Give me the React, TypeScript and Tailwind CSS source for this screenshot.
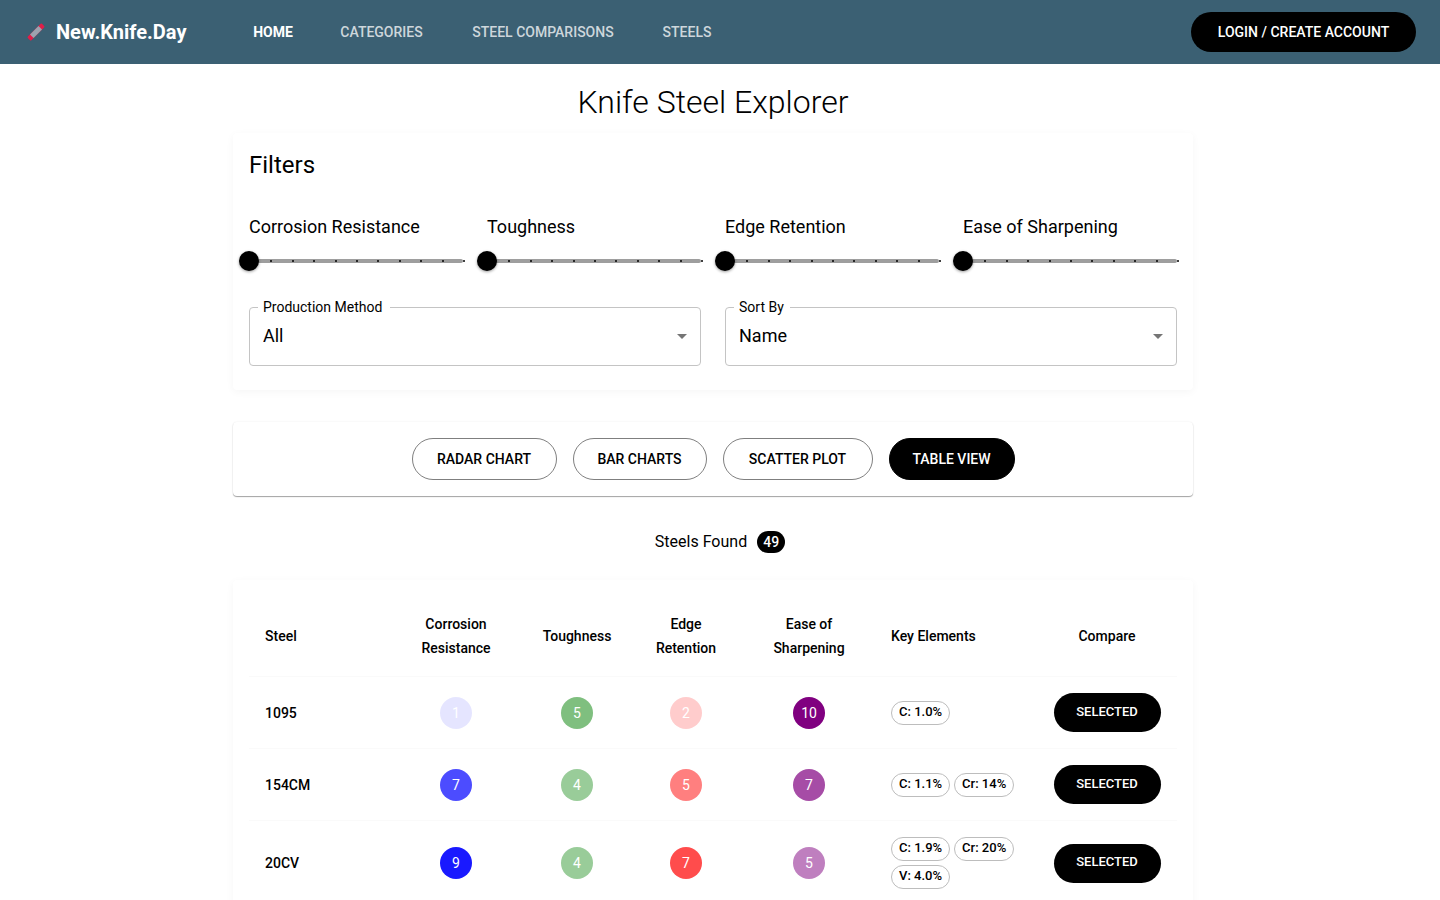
const navLinks = [
  { label: "HOME", width: "min-w-[86px]", active: true },
  { label: "CATEGORIES", width: "min-w-[131px]", active: false },
  { label: "STEEL COMPARISONS", width: "min-w-[192px]", active: false },
  { label: "STEELS", width: "min-w-[96px]", active: false },
];

const sliders = [
  { id: "corrosion", label: "Corrosion Resistance" },
  { id: "toughness", label: "Toughness" },
  { id: "edge", label: "Edge Retention" },
  { id: "ease", label: "Ease of Sharpening" },
];

const views = [
  { label: "RADAR CHART", width: "w-[145px]" },
  { label: "BAR CHARTS", width: "w-[134px]" },
  { label: "SCATTER PLOT", width: "w-[150px]" },
  { label: "TABLE VIEW", width: "w-[126px]" },
];

const steels = [
  { name: "1095", corrosion: 1, toughness: 5, edge: 2, ease: 10, elements: ["C: 1.0%"] },
  { name: "154CM", corrosion: 7, toughness: 4, edge: 5, ease: 7, elements: ["C: 1.1%", "Cr: 14%"] },
  { name: "20CV", corrosion: 9, toughness: 4, edge: 7, ease: 5, elements: ["C: 1.9%", "Cr: 20%", "V: 4.0%"] },
];

function KnifeLogo() {
  return (
    <svg width="24" height="24" viewBox="0 0 24 24" aria-hidden="true">
      <g transform="rotate(-45 12 12)">
        <rect x="2" y="9.5" width="20" height="5" rx="1" fill="#e11d48" />
        <rect x="6" y="9.5" width="12" height="5" fill="#9ca3af" />
      </g>
    </svg>
  );
}

function Header() {
  return (
    <header className="flex h-16 items-center bg-[#3b6073] px-6 text-white">
      <a href="#home" className="flex w-[206px] shrink-0 items-center gap-2 text-xl font-bold">
        <KnifeLogo />
        New.Knife.Day
      </a>
      <nav className="flex items-center">
        {navLinks.map((link) => (
          <a
            key={link.label}
            href="#nav"
            className={`${link.width} text-center text-sm ${link.active ? "font-bold" : "font-medium text-white/75"}`}
          >
            {link.label}
          </a>
        ))}
      </nav>
      <button
        type="button"
        className="ml-auto h-10 w-[225px] rounded-full bg-black text-sm font-medium"
      >
        LOGIN / CREATE ACCOUNT
      </button>
    </header>
  );
}

function RatingSlider({ id, label }: { id: string; label: string }) {
  return (
    <div>
      <label htmlFor={id} className="block text-lg leading-7">
        {label}
      </label>
      <div className="relative mt-2.5 h-5">
        <div className="absolute inset-x-0 top-2 h-1 rounded-full bg-[#9e9e9e]" />
        <div className="absolute -right-0.5 left-0 top-[9px] flex justify-between">
          {Array.from({ length: 11 }, (_, i) => (
            <span key={i} className="size-0.5 rounded-[1px] bg-black" />
          ))}
        </div>
        <input
          id={id}
          type="range"
          min={0}
          max={10}
          defaultValue={0}
          className="absolute -left-2.5 top-0 h-5 w-[calc(100%+20px)] cursor-pointer appearance-none bg-transparent [&::-webkit-slider-thumb]:size-5 [&::-webkit-slider-thumb]:appearance-none [&::-webkit-slider-thumb]:rounded-full [&::-webkit-slider-thumb]:bg-black [&::-webkit-slider-thumb]:shadow-[0_1px_3px_rgba(0,0,0,0.4)]"
        />
      </div>
    </div>
  );
}

function FilterSelect({
  id,
  label,
  options,
  labelWidth,
}: {
  id: string;
  label: string;
  options: string[];
  labelWidth: string;
}) {
  return (
    <div className="relative">
      <select
        id={id}
        className="block h-[59px] w-full appearance-none rounded border border-[#c4c4c4] bg-white px-[13px] pb-0.5 text-lg"
      >
        {options.map((option) => (
          <option key={option}>{option}</option>
        ))}
      </select>
      <label
        htmlFor={id}
        className={`absolute -top-2.5 left-[9px] bg-white pl-[5px] text-sm ${labelWidth}`}
      >
        {label}
      </label>
      <svg
        className="pointer-events-none absolute right-[7px] top-[17px]"
        width="24"
        height="24"
        viewBox="0 0 24 24"
        fill="#757575"
        aria-hidden="true"
      >
        <path d="M7 10l5 5 5-5z" />
      </svg>
    </div>
  );
}

function Score({ value, rgb }: { value: number; rgb: string }) {
  return (
    <td className="border-b border-[#fafafa] p-4">
      <span
        className="mx-auto flex size-8 items-center justify-center rounded-full text-sm text-white"
        style={{ backgroundColor: `rgba(${rgb}, ${value / 10})` }}
      >
        {value}
      </span>
    </td>
  );
}

function SteelTable() {
  const head = "border-b border-[#fafafa] px-4 py-4 text-sm leading-6 font-medium";
  return (
    <table className="w-full table-fixed border-separate border-spacing-0">
      <colgroup>
        <col className="w-[138px]" />
        <col className="w-[138px]" />
        <col className="w-[104px]" />
        <col className="w-[114px]" />
        <col className="w-[132px]" />
        <col className="w-[162px]" />
        <col className="w-[140px]" />
      </colgroup>
      <thead>
        <tr>
          <th className={`${head} text-left`}>Steel</th>
          <th className={head}>Corrosion Resistance</th>
          <th className={head}>Toughness</th>
          <th className={head}>Edge Retention</th>
          <th className={head}>Ease of Sharpening</th>
          <th className={`${head} text-left`}>Key Elements</th>
          <th className={head}>Compare</th>
        </tr>
      </thead>
      <tbody>
        {steels.map((steel) => (
          <tr key={steel.name}>
            <th scope="row" className="border-b border-[#fafafa] p-4 text-left text-sm font-medium">
              {steel.name}
            </th>
            <Score value={steel.corrosion} rgb="0, 0, 255" />
            <Score value={steel.toughness} rgb="0, 128, 0" />
            <Score value={steel.edge} rgb="255, 0, 0" />
            <Score value={steel.ease} rgb="128, 0, 128" />
            <td className="border-b border-[#fafafa] py-4 pl-4">
              <div className="flex flex-wrap gap-1">
                {steel.elements.map((element) => (
                  <span
                    key={element}
                    className="flex h-6 min-w-[59px] items-center justify-center rounded-full border border-[#bdbdbd] px-[7px] pb-0.5 text-[13px] leading-5 font-medium"
                  >
                    {element}
                  </span>
                ))}
              </div>
            </td>
            <td className="border-b border-[#fafafa] p-4">
              <button
                type="button"
                className="mx-auto block h-[39px] w-[107px] rounded-full bg-black pb-0.5 text-[13px] font-medium text-white"
              >
                SELECTED
              </button>
            </td>
          </tr>
        ))}
      </tbody>
    </table>
  );
}

export default function App() {
  return (
    <div className="min-h-screen bg-white font-[Roboto,sans-serif] text-black">
      <Header />
      <main className="pr-3.5">
        <div className="mx-auto max-w-[960px] pt-4">
          <h1 className="text-center text-[32px] leading-[44px] font-light">Knife Steel Explorer</h1>

          <section className="mt-[9px] rounded bg-white px-4 pt-4 pb-6 shadow-[0_2px_8px_rgba(0,0,0,0.04)]">
            <h2 className="text-2xl leading-8">Filters</h2>
            <div className="mt-8 grid grid-cols-4 gap-6">
              {sliders.map((slider) => (
                <RatingSlider key={slider.id} {...slider} />
              ))}
            </div>
            <div className="mt-9 grid grid-cols-2 gap-6">
              <FilterSelect
                id="method"
                label="Production Method"
                options={["All", "Conventional", "Powder Metallurgy"]}
                labelWidth="w-[132px]"
              />
              <FilterSelect
                id="sort"
                label="Sort By"
                options={["Name", "Toughness", "Edge Retention"]}
                labelWidth="w-[56px]"
              />
            </div>
          </section>

          <section className="mt-8 flex justify-center gap-4 rounded bg-white p-4 shadow-[0_1px_1px_rgba(0,0,0,0.35),0_0_2px_rgba(0,0,0,0.08)]">
            {views.map((view) => (
              <button
                key={view.label}
                type="button"
                className={`${view.width} h-[42px] rounded-full border text-sm font-medium ${
                  view.label === "TABLE VIEW" ? "border-black bg-black text-white" : "border-black/50"
                }`}
              >
                {view.label}
              </button>
            ))}
          </section>

          <div className="mt-8 flex items-center justify-center gap-2.5 pl-3.5">
            <span className="text-base leading-7">Steels Found</span>
            <span className="flex h-[22px] w-7 items-center justify-center rounded-full bg-black text-sm font-medium text-white">
              49
            </span>
          </div>

          <section className="mt-6 rounded bg-white p-4 shadow-[0_2px_8px_rgba(0,0,0,0.04)]">
            <SteelTable />
          </section>
        </div>
      </main>
    </div>
  );
}
